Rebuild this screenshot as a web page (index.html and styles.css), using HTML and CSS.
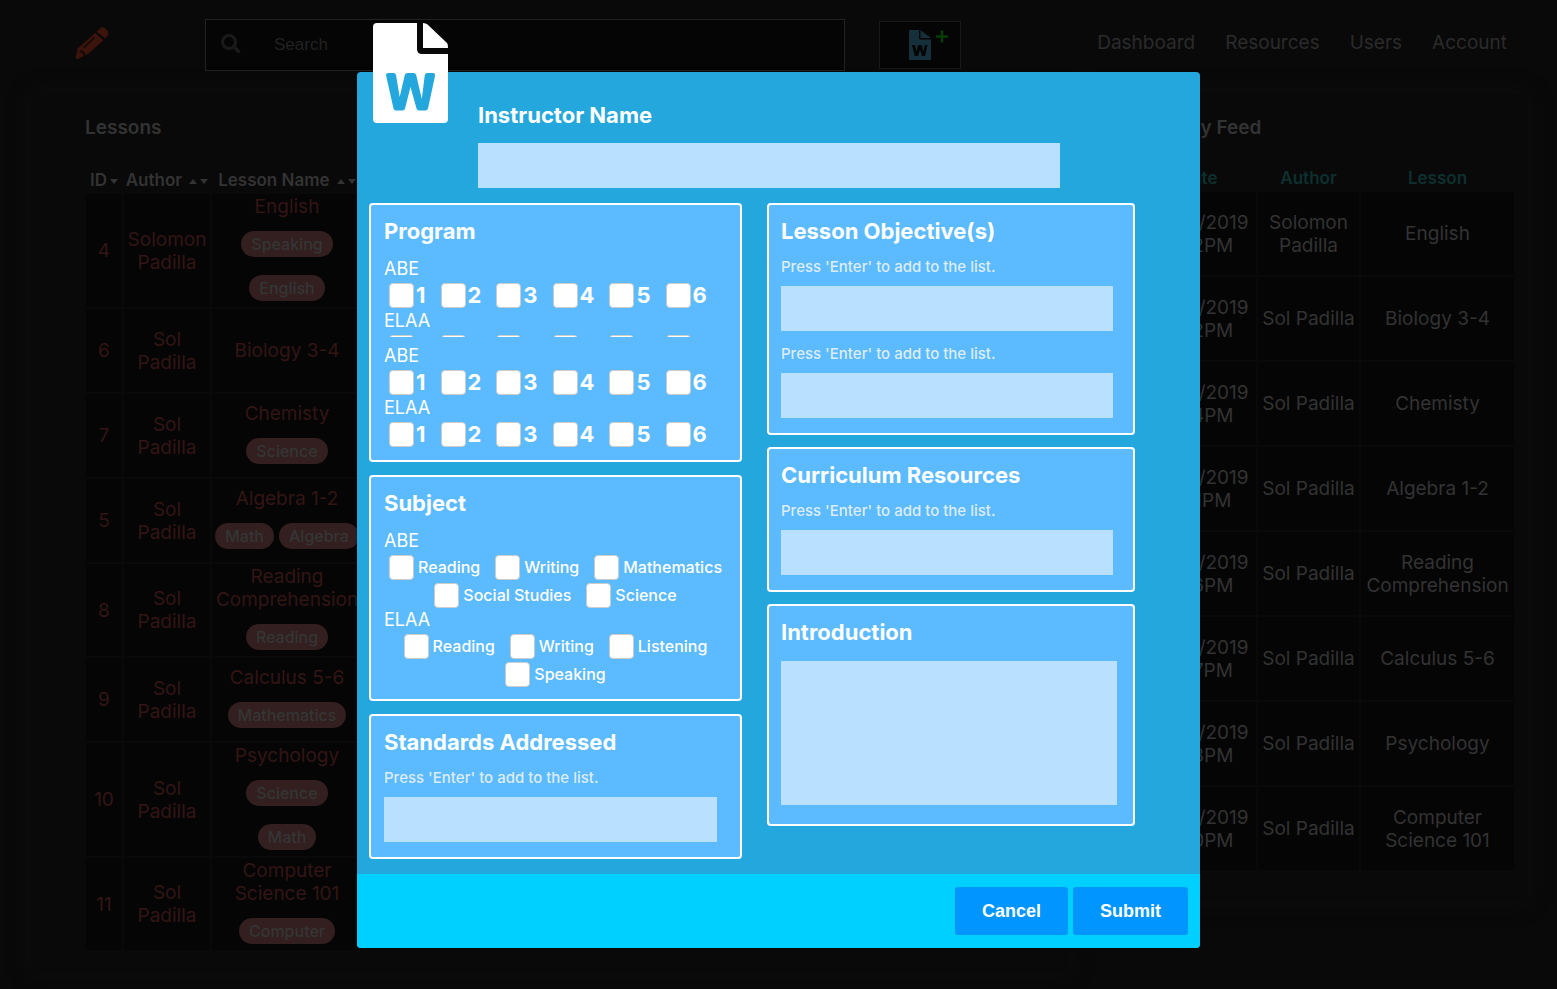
FILE: index.html
```
<!DOCTYPE html>
<html lang="en">
<head>
<meta charset="utf-8">
<title>Lessons</title>
<link rel="stylesheet" href="styles.css">
</head>
<body>
<header class="topbar">
  <svg class="pencil" viewBox="0 0 34 34" aria-hidden="true">
    <path fill="#3c140b" d="M24 3.500Q27-.5 31 3Q35.500 7 32 10.500L30 12.500L21.500 5.500Z"/>
    <path fill="#3c140b" d="M20.300 7L28.500 14.300L13.500 27.500L3 33Q.5 34 .8 31L2.500 22.500Z"/>
    <path fill="none" stroke="#090909" stroke-width="1.300" d="M8.500 22L19.500 11.500M4.500 26Q8 23.500 7.500 27Q11 26.500 8.500 30"/>
  </svg>
  <label class="search">
    <svg viewBox="0 0 20 20" aria-label="Search"><circle cx="8" cy="8" r="6.500" fill="none" stroke="#1a1a1a" stroke-width="3"/><path d="M13 13L18.500 18.500" stroke="#1a1a1a" stroke-width="3.500"/></svg>
    <input type="search" placeholder="Search">
  </label>
  <button class="new-lesson" aria-label="New lesson">
    <svg viewBox="0 0 41 32" aria-hidden="true">
      <path fill="#152f3b" d="M3 1H12V9Q12 10.500 13.500 10.500H24V30Q24 31 23 31H3Q2 31 2 30V2Q2 1 3 1ZM13.500 1L24 9H13.500Z"/>
      <path fill="#050505" d="M5 16H8L9.500 22.500L11.200 16H14.600L16.300 22.500L17.800 16H20.500L18 27H15L13 20.500L11 27H7.800Z"/>
      <path stroke="#073d07" stroke-width="2.500" d="M29 7.500H41M35 1.500V13.500"/>
    </svg>
  </button>
  <nav class="nav">
    <a href="#">Dashboard</a><a href="#">Resources</a><a href="#">Users</a><a href="#">Account</a>
  </nav>
</header>

<main class="board">
  <section class="panel panel-lessons">
    <h2>Lessons</h2>
    <table class="lessons">
      <colgroup><col class="c-id"><col class="c-author"><col class="c-name"></colgroup>
      <thead><tr>
        <th>ID<i class="down"></i></th>
        <th>Author <i class="up"></i><i class="down"></i></th>
        <th>Lesson Name <i class="up"></i><i class="down"></i></th>
      </tr></thead>
      <tbody>
        <tr><td>4</td><td>Solomon Padilla</td><td>English<div class="tags stacked"><span>Speaking</span><span>English</span></div></td></tr>
        <tr><td>6</td><td>Sol Padilla</td><td>Biology 3-4</td></tr>
        <tr><td>7</td><td>Sol Padilla</td><td>Chemisty<div class="tags"><span>Science</span></div></td></tr>
        <tr><td>5</td><td>Sol Padilla</td><td>Algebra 1-2<div class="tags"><span>Math</span><span>Algebra</span></div></td></tr>
        <tr><td>8</td><td>Sol Padilla</td><td>Reading Comprehension<div class="tags"><span>Reading</span></div></td></tr>
        <tr><td>9</td><td>Sol Padilla</td><td>Calculus 5-6<div class="tags"><span>Mathematics</span></div></td></tr>
        <tr><td>10</td><td>Sol Padilla</td><td>Psychology<div class="tags stacked"><span>Science</span><span>Math</span></div></td></tr>
        <tr><td>11</td><td>Sol Padilla</td><td>Computer Science 101<div class="tags"><span>Computer</span></div></td></tr>
      </tbody>
    </table>
  </section>
  <section class="panel panel-feed">
    <h2>Activity Feed</h2>
    <table class="feed">
      <colgroup><col class="c-date"><col class="c-who"><col class="c-lesson"></colgroup>
      <thead><tr><th>Date</th><th>Author</th><th>Lesson</th></tr></thead>
      <tbody>
        <tr><td>10/30/2019 2:22PM</td><td>Solomon Padilla</td><td>English</td></tr>
        <tr><td>10/30/2019 2:22PM</td><td>Sol Padilla</td><td>Biology 3-4</td></tr>
        <tr><td>10/30/2019 2:24PM</td><td>Sol Padilla</td><td>Chemisty</td></tr>
        <tr><td>10/30/2019 2:21PM</td><td>Sol Padilla</td><td>Algebra 1-2</td></tr>
        <tr><td>10/30/2019 2:26PM</td><td>Sol Padilla</td><td>Reading Comprehension</td></tr>
        <tr><td>10/30/2019 2:27PM</td><td>Sol Padilla</td><td>Calculus 5-6</td></tr>
        <tr><td>10/30/2019 2:28PM</td><td>Sol Padilla</td><td>Psychology</td></tr>
        <tr><td>10/30/2019 2:30PM</td><td>Sol Padilla</td><td>Computer Science 101</td></tr>
      </tbody>
    </table>
  </section>
</main>

<div class="overlay">
  <form class="modal" role="dialog" aria-label="New lesson">
    <svg class="doc" viewBox="0 0 75 100" aria-hidden="true">
      <path fill="#090909" d="M40 0H54L75 20V32H40Z"/>
      <path fill="#fff" d="M4 0H44V26Q44 31 49 31H75V96Q75 100 71 100H4Q0 100 0 96V4Q0 0 4 0Z"/>
      <path fill="#fff" d="M50 0Q53 0 54.500 1.500L74 20Q75 21 75 25H50Z"/>
      <path fill="#24a7dd" d="M15.500 50H20.500Q22.500 50 23 52L26.700 74L31.800 52Q32.400 50 34.500 50H40.500Q42.600 50 43.200 52L48.800 76L51.800 52Q52.200 50 54.500 50H60Q62.500 50 62 53L55 85.500Q54.500 87.500 52.500 87.500H46Q44 87.500 43.500 85.500L37.500 64L32 85.500Q31.500 87.500 29.500 87.500H23Q21 87.500 20.500 85.500L13.200 53Q12.500 50 15.500 50Z"/>
    </svg>
    <div class="instructor">
      <label class="title" for="instructor">Instructor Name</label>
      <input class="field" id="instructor" type="text">
    </div>
    <div class="columns">
      <div class="col">
        <fieldset class="card program">
          <h3 class="title">Program</h3>
          <div class="levels clipped">
            <p class="group">ABE</p>
            <div class="numbers"><label><input type="checkbox">1</label><label><input type="checkbox">2</label><label><input type="checkbox">3</label><label><input type="checkbox">4</label><label><input type="checkbox">5</label><label><input type="checkbox">6</label></div>
            <p class="group">ELAA</p>
            <div class="numbers"><label><input type="checkbox">1</label><label><input type="checkbox">2</label><label><input type="checkbox">3</label><label><input type="checkbox">4</label><label><input type="checkbox">5</label><label><input type="checkbox">6</label></div>
          </div>
          <div class="levels">
            <p class="group">ABE</p>
            <div class="numbers"><label><input type="checkbox">1</label><label><input type="checkbox">2</label><label><input type="checkbox">3</label><label><input type="checkbox">4</label><label><input type="checkbox">5</label><label><input type="checkbox">6</label></div>
            <p class="group">ELAA</p>
            <div class="numbers"><label><input type="checkbox">1</label><label><input type="checkbox">2</label><label><input type="checkbox">3</label><label><input type="checkbox">4</label><label><input type="checkbox">5</label><label><input type="checkbox">6</label></div>
          </div>
        </fieldset>
        <fieldset class="card subject">
          <h3 class="title">Subject</h3>
          <p class="group">ABE</p>
          <div class="topics"><label><input type="checkbox">Reading</label><label><input type="checkbox">Writing</label><label><input type="checkbox">Mathematics</label><label><input type="checkbox">Social Studies</label><label><input type="checkbox">Science</label></div>
          <p class="group">ELAA</p>
          <div class="topics"><label><input type="checkbox">Reading</label><label><input type="checkbox">Writing</label><label><input type="checkbox">Listening</label><label><input type="checkbox">Speaking</label></div>
        </fieldset>
        <fieldset class="card entry">
          <h3 class="title">Standards Addressed</h3>
          <label class="hint" for="standards">Press 'Enter' to add to the list.</label>
          <input class="field" id="standards" type="text">
        </fieldset>
      </div>
      <div class="col col-right">
        <fieldset class="card entry">
          <h3 class="title">Lesson Objective(s)</h3>
          <label class="hint" for="objective1">Press 'Enter' to add to the list.</label>
          <input class="field" id="objective1" type="text">
          <label class="hint" for="objective2">Press 'Enter' to add to the list.</label>
          <input class="field" id="objective2" type="text">
        </fieldset>
        <fieldset class="card entry">
          <h3 class="title">Curriculum Resources</h3>
          <label class="hint" for="resources">Press 'Enter' to add to the list.</label>
          <input class="field" id="resources" type="text">
        </fieldset>
        <fieldset class="card intro">
          <label class="title" for="introduction">Introduction</label>
          <textarea class="field" id="introduction"></textarea>
        </fieldset>
      </div>
    </div>
    <footer class="actions">
      <button type="button">Cancel</button>
      <button type="submit">Submit</button>
    </footer>
  </form>
</div>
</body>
</html>
```
FILE: styles.css
```
* { box-sizing: border-box; }
body {
  margin: 0;
  min-height: 100vh;
  background: #090909;
  color: #333;
  font: 19px/23px Inter, sans-serif;
}
h2, h3, p { margin: 0; }
input, textarea, button { font: inherit; }

/* top bar */
.topbar {
  display: flex;
  align-items: center;
  height: 93px;
  padding: 0 50px 3px 75px;
}
.pencil { width: 34px; height: 34px; margin: 0 96px 4px 0; flex: none; }
.search {
  display: flex;
  align-items: center;
  flex: 0 1 640px;
  height: 52px;
  padding-left: 15px;
  border: 1px solid #222;
  background: #050505;
}
.search svg { width: 20px; height: 20px; margin-bottom: 2px; flex: none; }
.search input {
  flex: 1;
  min-width: 0;
  margin-left: 33px;
  padding: 0;
  border: 0;
  outline: 0;
  background: none;
  color: #333;
  font: 17px/20px "Liberation Sans", sans-serif;
}
.search input::placeholder { color: #222; opacity: 1; }
.new-lesson {
  width: 82px;
  height: 48px;
  margin-left: 34px;
  padding: 0 0 0 15px;
  border: 1px solid #191919;
  background: #050505;
  flex: none;
}
.new-lesson svg { display: block; width: 41px; height: 32px; margin: auto; }
.nav { display: flex; gap: 30px; margin: 0 0 6px auto; }
.nav a { color: #2b2b2b; text-decoration: none; }

/* dashboard panels */
.board {
  display: grid;
  grid-template-columns: 1039fr 430fr;
  gap: 28px;
  align-items: start;
  padding: 0 29px 14px 31px;
}
.panel { box-shadow: 0 0 16px 2px #0d0d0d; background: #090909; }
.panel h2 { font-size: 19px; line-height: 24px; font-weight: 600; padding-top: 23px; }
.panel-lessons { padding: 0 0 22px 53px; }
.panel-lessons h2 { padding-left: 1px; margin-bottom: 26px; }
.panel-feed { padding: 0 12px 30px 41px; }
.panel-feed h2 { padding-left: 2px; margin-bottom: 24px; }
table { table-layout: fixed; border-spacing: 2px; }
th { height: 24px; padding: 0; font-size: 17px; font-weight: 600; white-space: nowrap; }
td { height: 83px; padding: 1px 0; background: #050505; text-align: center; vertical-align: middle; }
.lessons { width: 280px; }
.lessons td { color: #331515; }
.c-id { width: 36px; }
.c-author { width: 86px; }
.c-name { width: 150px; }
.feed { width: 100%; }
.feed th { color: #0d302e; }
.c-who { width: 101px; }
.c-lesson { width: 153px; }
.c-date { width: 115px; }
.up, .down {
  display: inline-block;
  margin-left: 3px;
  border: 4px solid transparent;
  vertical-align: 2px;
}
.up { border-top: 0; border-bottom: 5px solid #333; }
.down { border-bottom: 0; border-top: 5px solid #333; }
.tags {
  display: flex;
  flex-wrap: wrap;
  justify-content: center;
  gap: 18px 5px;
  padding: 13px 0 5px;
}
.tags.stacked { flex-direction: column; align-items: center; }
.tags span {
  padding: 0 10px;
  border-radius: 13px;
  background: #331f20;
  color: #333635;
  font-size: 16px;
  line-height: 26px;
  font-weight: 500;
}

/* dialog */
.overlay { position: absolute; top: 72px; left: 0; right: 0; }
.modal {
  position: relative;
  width: calc(100% - 714px);
  min-width: 780px;
  margin: 0 auto;
  border-radius: 4px;
  background: #24a7dd;
  color: #fff;
}
.doc { position: absolute; left: 16px; top: -49px; width: 75px; height: 100px; }
.instructor { padding: 30px 140px 15px 121px; }
.title { display: block; font-size: 22px; line-height: 26px; font-weight: 700; }
.instructor .title { margin-bottom: 15px; }
.field {
  display: block;
  width: 100%;
  height: 45px;
  padding: 0 12px;
  border: 0;
  border-radius: 0;
  background: #b9e1ff;
  color: #14506e;
}
.columns {
  display: grid;
  grid-template-columns: 373fr 368fr;
  gap: 25px;
  align-items: start;
  padding: 0 65px 15px 12px;
}
.col { display: grid; gap: 13px; }
.col-right { gap: 12px; }
.card {
  min-width: 0;
  margin: 0;
  padding: 13px 13px 11px;
  border: 2px solid #fff;
  border-radius: 4px;
  background: #5cbaff;
}
.col-right .card { padding-left: 12px; }
.card h3 { margin-bottom: 14px; }
.group { font-size: 18px; line-height: 22px; }
.clipped { height: 79px; overflow: hidden; margin-bottom: 8px; }
.card label { display: block; }
.card .numbers label, .card .topics label { display: flex; align-items: center; height: 25px; }
.numbers { display: flex; gap: 15px; padding: 3px 0 2px 5px; }
.numbers label { gap: 2px; font-size: 22px; font-weight: 700; }
.topics { display: flex; flex-wrap: wrap; justify-content: center; gap: 3px 15px; padding: 3px 0 1px; }
.topics label { gap: 4px; font-size: 16px; font-weight: 500; }
input[type="checkbox"] {
  appearance: none;
  width: 25px;
  height: 25px;
  margin: 0;
  border: 1px solid #ccc;
  border-radius: 4px;
  background: #fff;
}
input[type="checkbox"]:checked { background: #0095ff; }
.hint { color: #dcedf9; font-size: 15px; line-height: 18px; font-weight: 500; margin-bottom: 10px; }
.entry { padding-bottom: 15px; }
.entry .field { width: 97%; }
.col-right .entry .field { width: 98%; }
.field + .hint { margin-top: 14px; }
.intro { padding-bottom: 19px; }
.intro .title { margin-bottom: 16px; }
.intro .field { width: 99%; height: 144px; padding: 12px; resize: none; }
.actions {
  display: flex;
  justify-content: flex-end;
  gap: 5px;
  padding: 13px 12px;
  border-radius: 0 0 4px 4px;
  background: #00d0ff;
}
.actions button {
  height: 48px;
  padding: 0 27px;
  border: 0;
  border-radius: 3px;
  background: #0095ff;
  color: #fff;
  font: bold 18px/20px "Liberation Sans", sans-serif;
}
```
